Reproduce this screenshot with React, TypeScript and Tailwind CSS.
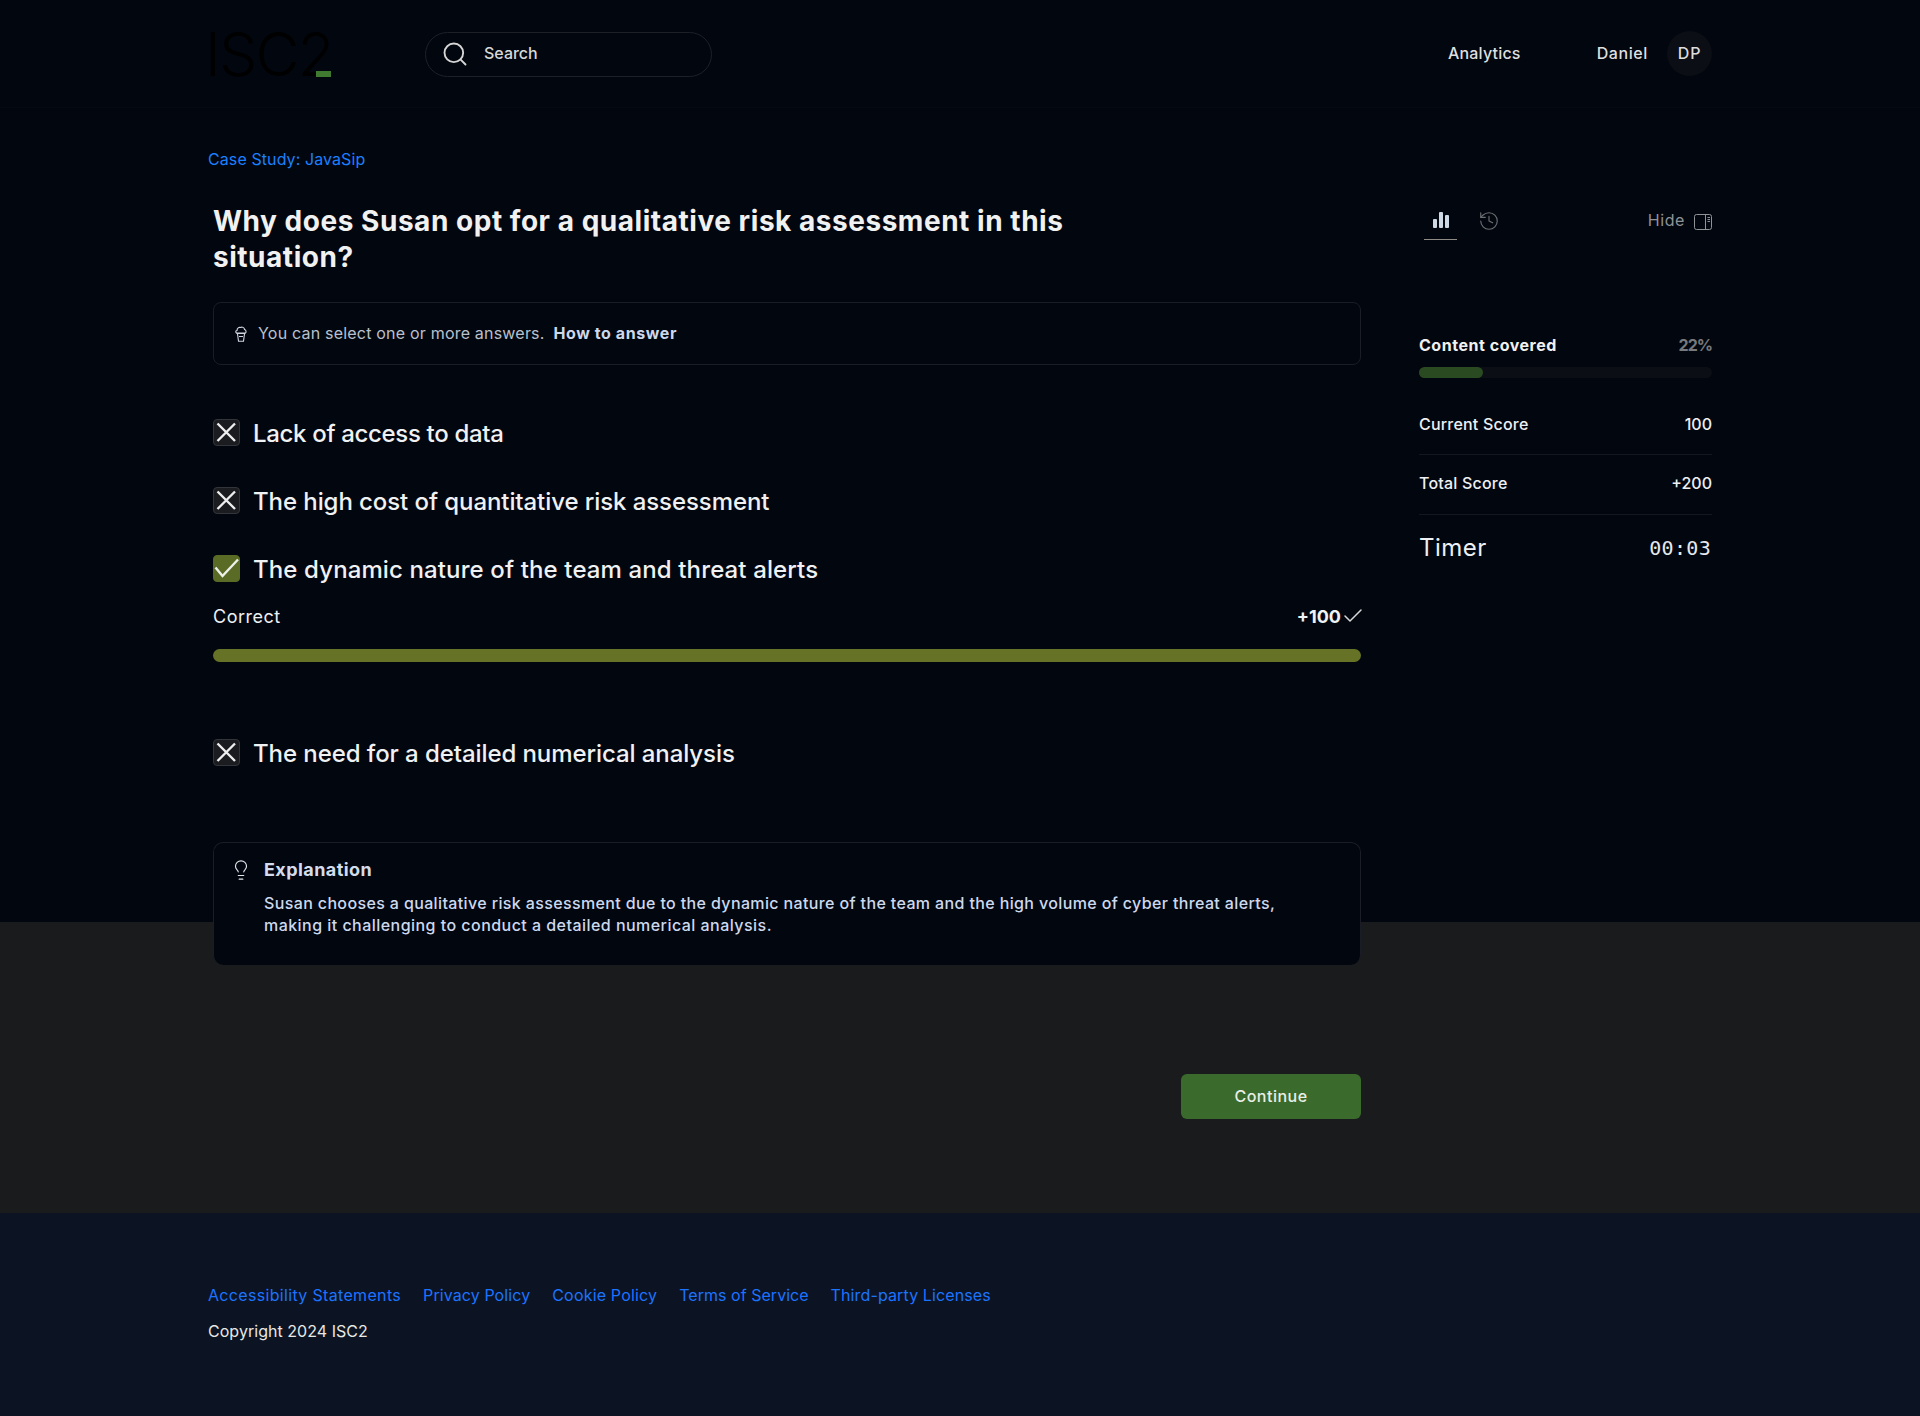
import React from "react";
import { Search, History, Lightbulb, Check } from "lucide-react";

function Option({ text, correct, className, textClass }: { text: string; correct?: boolean; className?: string; textClass?: string }) {
  return (
    <div className={"flex items-center gap-[13px] h-[27px] " + (className ?? "")}>
      <span
        className={
          "flex w-[27px] h-[27px] shrink-0 items-center justify-center rounded-[4px] " +
          (correct ? "bg-[#5a6b26] border border-[#5a6b26]" : "bg-[#1b1c20] border border-[#33353a]")
        }
      >
        {correct ? (
          <svg width="27" height="27" viewBox="0 0 27 27" fill="none" stroke="#eef0ea" strokeWidth="2.4" className="shrink-0">
            <path d="M2.5 12.5L9.5 21L25 4.5" />
          </svg>
        ) : (
          <svg width="27" height="27" viewBox="0 0 27 27" fill="none" stroke="#eeeeee" strokeWidth="2.4" className="shrink-0">
            <path d="M4.5 4.5L22 22M22 4.5L4.5 22" />
          </svg>
        )}
      </span>
      <span className={"text-[24px] leading-[30px] font-medium text-[#f0f1f3] mt-[3px] " + (textClass ?? "")}>{text}</span>
    </div>
  );
}

function Row({ label, value, className }: { label: string; value: string; className?: string }) {
  return (
    <div className={"flex justify-between items-center h-[60px] border-b border-[#14171d] text-[16px] font-medium text-[#eef0f3] " + (className ?? "")}>
      <span className="tracking-[0.2px]">{label}</span>
      <span>{value}</span>
    </div>
  );
}

export default function App() {
  const links = [
    { t: "Accessibility Statements", c: "tracking-[0.33px]" },
    { t: "Privacy Policy", c: "tracking-[0.09px]" },
    { t: "Cookie Policy", c: "tracking-[0.18px]" },
    { t: "Terms of Service", c: "tracking-[0.03px]" },
    { t: "Third-party Licenses", c: "tracking-[0.12px]" },
  ];
  return (
    <div className="w-full min-h-[1416px] font-['Inter',sans-serif] text-white bg-[#0c1322]">
      <div className="h-[1213px] bg-[linear-gradient(#02060f_922px,#1a1b1c_922px)]">
        <header className="h-[108px] border-b border-[#050911]">
          <div className="w-[1504px] mx-auto flex items-center h-full">
            <div className="relative w-[217px] h-[62px] flex items-center">
              <span className="text-[60px] leading-[62px] font-light text-[#000000] tracking-[-1.5px] -ml-[3px]">ISC2</span>
              <span className="absolute left-[108px] top-[48px] w-[15px] h-[6px] bg-[#3f7a30]"></span>
            </div>
            <div className="w-[287px] h-[45px] rounded-full border border-[#1d2027] flex items-center pl-[15px] mt-[1px]">
              <Search size={28} strokeWidth={1.6} className="text-[#d6d6d6]" />
              <span className="ml-[15px] text-[16px] font-medium text-[#d8d8d8] mb-[2px]">Search</span>
            </div>
            <div className="ml-auto flex items-center">
              <span className="text-[16px] font-medium text-[#dfdfdf] tracking-[0.2px] mr-[76px] mb-[2px]">Analytics</span>
              <span className="text-[16px] font-medium text-[#dfdfdf] tracking-[0.6px] mr-[19px] mb-[2px]">Daniel</span>
              <span className="w-[45px] h-[45px] rounded-full bg-[#0b0e14] flex items-center justify-center text-[16px] font-medium text-[#dcdcdc] tracking-[0.8px] pb-[2px]">DP</span>
            </div>
          </div>
        </header>

        <div className="w-[1504px] mx-auto flex">
          <main className="w-[1153px] shrink-0">
            <div className="pt-[41px] h-[62px] text-[16px] leading-[20px] text-[#1a80ff] tracking-[0.09px]">Case Study: JavaSip</div>
            <div className="ml-[5px] w-[1148px]">
              <h1 className="mt-[33px] text-[28px] leading-[36px] font-bold text-[#f1f1f1] w-[900px] tracking-[0.53px]">
                Why does Susan opt for a qualitative risk assessment in this situation?
              </h1>
              <div className="mt-[27px] h-[63px] rounded-[8px] border border-[#1a1d25] flex items-center pl-[21px] text-[16px]">
                <svg width="12" height="16" viewBox="0 0 12 16" fill="none" stroke="#cfd6e2" strokeWidth="1.1">
                  <path d="M2 7C0.4 7 0.4 4.5 2 4.5C2 2 4 1 5.5 1.5C7 0.5 9.5 1.5 9.5 3.5C11.5 4 11.5 7 10 7Z" />
                  <path d="M1.5 7.5H10.5M2.5 8L3.5 15.2H8.5L9.5 8M4 10.5H8" />
                </svg>
                <span className="ml-[11px] text-[#b9c0cc] tracking-[0.2px] mb-[2px]">You can select one or more answers.</span>
                <span className="ml-[9px] font-bold text-[#ccd8ec] tracking-[0.58px] mb-[2px]">How to answer</span>
              </div>
              <Option className="mt-[54px]" textClass="tracking-[-0.33px]" text="Lack of access to data" />
              <Option className="mt-[41px]" textClass="tracking-[-0.08px]" text="The high cost of quantitative risk assessment" />
              <Option className="mt-[41px]" textClass="tracking-[0.12px]" correct text="The dynamic nature of the team and threat alerts" />
              <div className="mt-[23px] flex justify-between items-center h-[22px] text-[18px]">
                <span className="text-[#eef0f3] tracking-[0.5px]">Correct</span>
                <span className="flex items-center font-bold text-[#f0f2f5] -mr-[4px]">
                  +100
                  <Check size={24} strokeWidth={1.5} className="text-[#d8d8d8]" />
                </span>
              </div>
              <div className="mt-[22px] h-[13px] rounded-full bg-[#667226]"></div>
              <Option className="mt-[77px]" textClass="tracking-[-0.08px]" text="The need for a detailed numerical analysis" />
              <div className="mt-[76px] h-[123px] rounded-[10px] border border-[#1a1d25] border-b-0 bg-[#02060f] flex pl-[16px] pt-[16px]">
                <Lightbulb size={22} strokeWidth={1.25} className="text-[#e3e6ea] shrink-0" />
                <div className="ml-[12px] w-[1060px]">
                  <div className="text-[18px] leading-[22px] font-bold text-[#d3dced] tracking-[0.43px]">Explanation</div>
                  <p className="mt-[11px] text-[16px] leading-[22px] font-medium text-[#cdd9ee] tracking-[0.37px]">
                    Susan chooses a qualitative risk assessment due to the dynamic nature of the team and the high volume of cyber threat alerts, <span className="tracking-[0.46px]">making it challenging to conduct a detailed numerical analysis.</span>
                  </p>
                </div>
              </div>
              <div className="mt-[109px] flex justify-end">
                <button className="w-[180px] h-[45px] rounded-[6px] bg-[#3b6a2d] text-[16px] font-medium text-[#e8efe6] tracking-[0.5px] pb-[2px]">Continue</button>
              </div>
            </div>
          </main>

          <aside className="ml-[58px] w-[293px] pt-[96px]">
            <div className="flex justify-between items-start h-[36px]">
              <div className="flex items-start ml-[5px]">
                <div className="w-[33px] h-[36px] border-b-[1.5px] border-[#8f8a84] flex justify-center pt-[8px]">
                  <svg width="16" height="16" viewBox="0 0 16 16" className="text-[#cfd9e6]" fill="currentColor">
                    <rect x="0" y="7" width="4" height="9" rx="1" />
                    <rect x="6" y="0" width="4" height="16" rx="1" />
                    <rect x="12" y="3" width="4" height="13" rx="1" />
                  </svg>
                </div>
                <History size={22} strokeWidth={1.25} className="text-[#6d6f72] ml-[21px] mt-[6px]" />
              </div>
              <div className="flex items-center gap-[9px] mt-[4px] text-[16px] text-[#8f9296] tracking-[0.6px]">
                <span className="mb-[3px]">Hide</span>
                <svg width="18" height="16" viewBox="0 0 18 16" fill="none" stroke="#8f9296" strokeWidth="1">
                  <rect x="0.5" y="0.5" width="17" height="15" rx="2" />
                  <path d="M11.5 0.5V15.5M13.5 3.5H16M13.5 5.5H16M13.5 7.5H16" />
                </svg>
              </div>
            </div>
            <div className="mt-[95px] flex justify-between text-[16px] leading-[20px] font-bold">
              <span className="text-[#f1f1f1] tracking-[0.53px]">Content covered</span>
              <span className="text-[#77797c] tracking-[-1px]">22%</span>
            </div>
            <div className="mt-[12px] h-[11px] rounded-full bg-[#0b0e14]">
              <div className="h-full rounded-full bg-[#2a4a22]" style={{ width: "22%" }}></div>
            </div>
            <div className="mt-[17px]">
              <Row className="pb-[2px]" label="Current Score" value="100" />
              <Row className="pb-[4px]" label="Total Score" value="+200" />
            </div>
            <div className="flex justify-between items-center h-[66px]">
              <span className="text-[24px] text-[#eef0f3] tracking-[0.5px]">Timer</span>
              <span className="text-[20px] font-['DejaVu_Sans_Mono',monospace] text-[#e6e9ee] tracking-[0.3px] mr-[1px]">00:03</span>
            </div>
          </aside>
        </div>
      </div>

      <footer className="h-[203px] w-[1504px] mx-auto pt-[71px]">
        <nav className="flex gap-[22px] text-[16px] leading-[22px] text-[#1b73ff]">
          {links.map((l) => (
            <a key={l.t} className={l.c}>{l.t}</a>
          ))}
        </nav>
        <p className="mt-[14px] text-[16px] leading-[22px] text-[#e8e8e4] tracking-[0.04px]">Copyright 2024 ISC2</p>
      </footer>
    </div>
  );
}
